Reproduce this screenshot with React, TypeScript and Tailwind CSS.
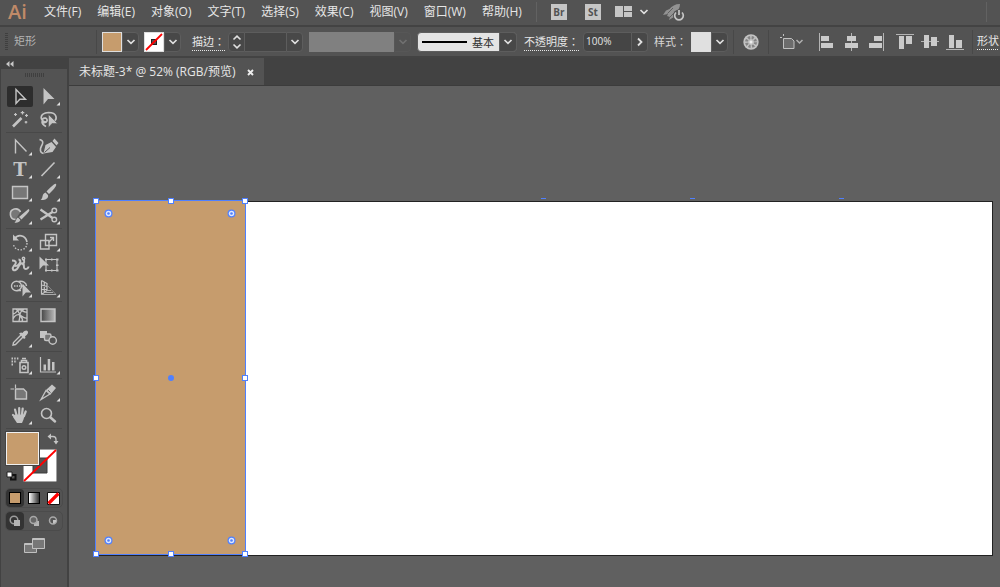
import type { ReactNode } from 'react';

interface ToolProps {
  label: string;
  active?: boolean;
  more?: boolean;
  children: ReactNode;
}

const menus = [
  '文件(F)',
  '编辑(E)',
  '对象(O)',
  '文字(T)',
  '选择(S)',
  '效果(C)',
  '视图(V)',
  '窗口(W)',
  '帮助(H)',
];

function Tool({ label, active, more, children }: ToolProps) {
  return (
    <button aria-label={label} aria-pressed={!!active} className="w-7 h-[23px]">
      <svg
        viewBox="0 0 28 23"
        className="block w-7 h-[23px]"
        fill="none"
        stroke="#c4c4c4"
        strokeWidth="1.4"
      >
        {active && <rect x="1" y="1" width="26" height="21" rx="2" fill="#2d2d2d" stroke="none" />}
        {children}
        {more && <path d="M26 17v3.5h-3.5z" fill="#e0e0e0" stroke="none" />}
      </svg>
    </button>
  );
}

function ToolGroup({ children }: { children: ReactNode }) {
  return (
    <div className="flex flex-wrap w-14 relative mb-1 after:absolute after:inset-x-0 after:-bottom-[2px] after:h-px after:bg-[#484848]">
      {children}
    </div>
  );
}

function Chevron({ color = '#e0e0e0' }: { color?: string }) {
  return (
    <svg viewBox="0 0 10 6" className="w-[10px] h-[6px]" fill="none" stroke={color} strokeWidth="1.7">
      <path d="M1.5 1l3.5 3.3L8.5 1" />
    </svg>
  );
}

function DropButton({ label, disabled }: { label: string; disabled?: boolean }) {
  return (
    <button
      aria-label={label}
      disabled={disabled}
      className={`w-[17px] h-5 flex items-center justify-center rounded-r-sm border ${
        disabled ? 'border-[#575757]' : 'bg-[#484848] border-[#5d5d5d]'
      }`}
    >
      <Chevron color={disabled ? '#707070' : '#e0e0e0'} />
    </button>
  );
}

function Divider() {
  return <div className="w-px h-6 bg-[#484848] shrink-0" />;
}

function MenuBar() {
  return (
    <header className="h-[25px] pb-[2px] flex items-center overflow-hidden shrink-0">
      <span className="w-11 pl-2 shrink-0 text-xl leading-5 font-semibold text-[#c08a68] font-['Open_Sans',sans-serif]">
        Ai
      </span>
      <nav className="flex gap-4 text-xs whitespace-nowrap text-[#e6e6e6]">
        {menus.map((menu) => (
          <button key={menu}>{menu}</button>
        ))}
      </nav>
      <div className="ml-[14px] w-px h-5 bg-[#626262] shrink-0" />
      <button className="ml-[14px] w-4 h-4 shrink-0 bg-[#c6c6c6] text-[#535353] text-[10px] leading-4 font-bold">
        Br
      </button>
      <button className="ml-[18px] w-4 h-4 shrink-0 bg-[#c6c6c6] text-[#535353] text-[10px] leading-4 font-bold">
        St
      </button>
      <button aria-label="排列文档" className="ml-[14px] flex items-center gap-[7px] shrink-0">
        <svg viewBox="0 0 17 12" className="w-[17px] h-3" fill="#c6c6c6">
          <path d="M0 0h8v11H0zM9 0h8v5H9zM9 6h8v5H9z" />
        </svg>
        <Chevron />
      </button>
      <button aria-label="GPU 性能" className="ml-[14px] shrink-0">
        <svg viewBox="0 0 22 18" className="w-[22px] h-[18px]" fill="#929292">
          <path d="M17 1C12 1 9 3 6.500 6L3 7.500 0 12l5-1-1 2 3 1-1 3 5-3 1-4c3-3 5-5 5-9z" />
          <path d="M4.500 10.500L10 5M7 14l5-5" stroke="#535353" strokeWidth=".8" />
          <circle cx="16" cy="12.500" r="6" fill="#535353" />
          <path
            d="M13 9.500a4.300 4.300 0 1 0 6 0M16 7v5"
            fill="none"
            stroke="#c6c6c6"
            strokeWidth="1.7"
          />
        </svg>
      </button>
      <div className="ml-auto mr-[13px] w-px h-5 bg-[#626262]" />
    </header>
  );
}

function AlignIcon({ label, d, line }: { label: string; d: string; line: string }) {
  return (
    <button aria-label={label}>
      <svg viewBox="0 0 18 18" className="w-[18px] h-[18px]">
        <path d={line} stroke="#b4b4b4" fill="none" />
        <path d={d} fill="#cacaca" />
      </svg>
    </button>
  );
}

function ControlBar() {
  return (
    <section className="h-[33px] flex items-center shrink-0 overflow-hidden border-y-2 border-[#434343] text-xs text-[#d6d6d6] whitespace-nowrap">
      <svg viewBox="0 0 3 18" className="ml-[5px] w-[3px] h-[18px] shrink-0">
        <path d="M1.500 0v18" stroke="#3f3f3f" strokeWidth="3" strokeDasharray="1 1" />
      </svg>
      <span className="ml-[6px] w-[82px] shrink-0 text-[11px] text-[#b4b4b4]">矩形</span>
      <Divider />
      <div className="ml-[5px] flex shrink-0">
        <button aria-label="填色" className="w-5 h-5 bg-[#c69c6d] border border-[#dedede]" />
        <DropButton label="填色选项" />
      </div>
      <div className="ml-[5px] flex shrink-0">
        <button aria-label="描边颜色" className="w-5 h-5 border border-[#dedede]">
          <svg viewBox="0 0 18 18" className="w-full h-full bg-white">
            <rect x="6.500" y="6.500" width="5" height="5" fill="#555" stroke="#222" />
            <path d="M1 17L17 1" stroke="#f00" strokeWidth="1.8" />
          </svg>
        </button>
        <DropButton label="描边颜色选项" />
      </div>
      <label
        htmlFor="stroke-width"
        className="ml-[11px] w-9 shrink-0 text-[11px] text-[#e6e6e6] underline decoration-dotted underline-offset-4 font-['Noto_Sans_CJK_TC',sans-serif]"
      >
        描边：
      </label>
      <div className="flex shrink-0">
        <button
          aria-label="调整描边粗细"
          className="w-[17px] h-5 flex items-center justify-center bg-[#484848] border border-[#5d5d5d] rounded-l-sm"
        >
          <svg viewBox="0 0 10 16" className="w-[10px] h-4" fill="none" stroke="#e0e0e0" strokeWidth="1.600">
            <path d="M1.500 5.500L5 2.200l3.500 3.300M1.500 10.500L5 13.800l3.500-3.300" />
          </svg>
        </button>
        <input id="stroke-width" className="w-[41px] h-5 bg-[#454545] border-y border-[#5d5d5d] px-1" />
        <DropButton label="描边粗细选项" />
      </div>
      <div className="ml-[6px] flex shrink-0">
        <div className="w-[85px] h-5 bg-[#808080]" />
        <DropButton label="变量宽度配置文件" disabled />
      </div>
      <div className="ml-[6px] relative shrink-0">
        <select
          aria-label="画笔定义"
          className="appearance-none block w-[100px] h-5 pl-[54px] text-[11px] leading-5 text-[#303030] bg-[#e4e4e4] border border-[#5d5d5d] rounded-sm"
        >
          <option>基本</option>
        </select>
        <div className="absolute left-[5px] top-[9px] w-[45px] h-[2px] bg-black pointer-events-none" />
        <div className="absolute right-0 top-0 w-[18px] h-5 flex items-center justify-center bg-[#484848] border border-[#5d5d5d] rounded-r-sm pointer-events-none">
          <Chevron />
        </div>
      </div>
      <label
        htmlFor="opacity"
        className="ml-[7px] w-[59px] shrink-0 text-[11px] text-[#e6e6e6] underline decoration-dotted underline-offset-4 font-['Noto_Sans_CJK_TC',sans-serif]"
      >
        不透明度：
      </label>
      <div className="flex shrink-0">
        <input
          id="opacity"
          defaultValue="100%"
          className="w-[49px] h-5 px-[2px] pb-[2px] text-[10px] text-[#e6e6e6] bg-[#454545] border border-[#5d5d5d] rounded-l-sm"
        />
        <button
          aria-label="不透明度滑块"
          className="w-4 h-5 flex items-center justify-center bg-[#484848] border border-l-0 border-[#5d5d5d] rounded-r-sm"
        >
          <svg viewBox="0 0 6 10" className="w-[6px] h-[10px]" fill="none" stroke="#e0e0e0" strokeWidth="1.8">
            <path d="M1 1.500L4.500 5 1 8.500" />
          </svg>
        </button>
      </div>
      <span className="ml-[6px] w-[37px] shrink-0 text-[11px] font-['Noto_Sans_CJK_TC',sans-serif]">样式：</span>
      <div className="flex shrink-0">
        <button aria-label="图形样式" className="w-5 h-5 bg-[#e0e0e0] border border-[#dedede]" />
        <DropButton label="图形样式选项" />
      </div>
      <div className="ml-[5px] flex shrink-0">
        <Divider />
      </div>
      <button aria-label="重新着色图稿" className="ml-[9px] shrink-0">
        <svg viewBox="0 0 16 16" className="w-4 h-4">
          <circle cx="8" cy="8" r="7.700" fill="#c4c4c4" />
          <circle cx="8" cy="8" r="4.500" fill="none" stroke="#858585" strokeWidth="3" strokeDasharray="2.300 1.230" />
          <path d="M8 1v14M1 8h14M3 3l10 10M13 3L3 13" stroke="#bbb" strokeWidth=".6" />
          <circle cx="8" cy="8" r="1.500" fill="#eee" />
        </svg>
      </button>
      <div className="ml-[9px] flex shrink-0">
        <Divider />
      </div>
      <button aria-label="对齐到" className="ml-[11px] flex items-center shrink-0">
        <svg viewBox="0 0 15 16" className="w-[15px] h-4" fill="none" stroke="#c0c0c0">
          <path d="M3.500 4.500h8l2.500 2.500v7.500H3.500z" fill="#6c6c6c" />
          <path d="M0 3.500h2M3.500 0v2" />
        </svg>
        <svg viewBox="0 0 9 6" className="w-[9px] h-[6px]" fill="none" stroke="#b0b0b0" strokeWidth="1.500">
          <path d="M1.500 1l3 3 3-3" />
        </svg>
      </button>
      <div className="ml-[14px] flex gap-[7px] shrink-0">
        <AlignIcon label="水平左对齐" line="M1.500 0v18" d="M3 3h8v5H3zM3 10h12v5H3z" />
        <AlignIcon label="水平居中对齐" line="M8.500 0v18" d="M4 3h9v5H4zM2 10h13v5H2z" />
        <AlignIcon label="水平右对齐" line="M15.500 0v18" d="M6 3h8v5H6zM1 10h13v5H1z" />
      </div>
      <div className="ml-[10px] flex gap-[7px] shrink-0">
        <AlignIcon label="垂直顶对齐" line="M0 1.500h18" d="M3 3h5v13H3zM10 3h6v8h-6z" />
        <AlignIcon label="垂直居中对齐" line="M0 8.500h18" d="M3 2h5v13H3zM10 4h6v9h-6z" />
        <AlignIcon label="垂直底对齐" line="M0 16.500h18" d="M3 2h5v13H3zM10 7h6v8h-6z" />
      </div>
      <div className="ml-2 mr-1 flex shrink-0">
        <Divider />
      </div>
      <button className="shrink-0 text-[11px] text-[#e6e6e6] underline decoration-dotted underline-offset-4">
        形状
      </button>
    </section>
  );
}

function ColorControls() {
  return (
    <div className="relative w-14 h-[55px] mt-[5px]">
      <button aria-label="描边" className="absolute left-[17px] top-[17px] w-[34px] h-[33px]">
        <svg viewBox="0 0 34 33" className="block w-full h-full">
          <path d="M0 0h34v33H0z" fill="#fff" stroke="#444" />
          <path d="M10 9h14v15H10z" fill="#535353" stroke="#3c3c3c" />
          <path d="M1 32L33 1" stroke="#f00" strokeWidth="1.8" />
        </svg>
      </button>
      <button
        aria-label="填色"
        className="absolute left-0 top-0 w-[33px] h-[33px] bg-[#c69c6d] border border-[#f0f0f0] outline outline-[#444]"
      />
      <button aria-label="互换填色和描边" className="absolute left-[41px] top-px w-[12px] h-[12px]">
        <svg viewBox="0 0 12 12" className="block w-full h-full" fill="none" stroke="#c4c4c4" strokeWidth="1.3">
          <path d="M3 3.500h3a3 3 0 0 1 3 3V9" />
          <path d="M4 .500v6L0.500 3.500zM6.500 8h5l-2.500 3.500z" fill="#c4c4c4" stroke="none" />
        </svg>
      </button>
      <button aria-label="默认填色和描边" className="absolute left-0 top-[39px] w-[11px] h-[10px]">
        <svg viewBox="0 0 11 10" className="block w-full h-full">
          <path d="M5 4h4.500v4.500H5z" fill="none" stroke="#111" strokeWidth="2" />
          <path d="M1 1h5v5H1z" fill="#fff" stroke="#222" />
        </svg>
      </button>
    </div>
  );
}

function ToolPanel() {
  return (
    <aside className="w-[67px] shrink-0 bg-[#535353] border-l border-[#424242]">
      <button aria-label="折叠面板" className="w-full h-[11px] flex items-center pl-[5px] bg-[#424242]">
        <svg viewBox="0 0 8 6" className="w-2 h-[6px]" fill="#c8c8c8">
          <path d="M3.500 0v6L0 3zM7.500 0v6L4 3z" />
        </svg>
      </button>
      <div className="h-4 flex justify-center pt-1">
        <svg viewBox="0 0 19 4" className="w-[19px] h-1">
          <path d="M0 2h19" stroke="#3f3f3f" strokeWidth="4" strokeDasharray="1 1" />
        </svg>
      </div>

      <div className="pl-[5px]">
        <ToolGroup>
          <Tool label="选择工具" active>
            <path d="M10 4.500v14l3.800-4.300h5.700z" />
          </Tool>
          <Tool label="直接选择工具" more>
            <path d="M9.500 3V19.500l4.500-5.500h6.500z" fill="#c4c4c4" stroke="none" />
          </Tool>
          <Tool label="魔棒工具">
            <path d="M7 18.500L15.500 10" strokeWidth="2.600" />
            <path d="M16.500 3v3.500M14.700 4.700h3.600M20.500 6v3M19 7.500h3M9.500 5v3M8 6.500h3M20 13v2.500M18.700 14.200h2.600" strokeWidth="1.200" />
          </Tool>
          <Tool label="套索工具">
            <path d="M13 14c-8 0-8-9 1.500-9.500 9 0 9 7 5 9M9 14.500c-3-4 3-6 4-3s-4 4-5 2c0 3 2 4 4 5" strokeWidth="1.700" />
            <path d="M14.500 6.500v13l3.500-4h5.500z" fill="#c4c4c4" stroke="#535353" strokeWidth=".5" />
          </Tool>
        </ToolGroup>

        <ToolGroup>
          <Tool label="锚点工具" more>
            <path d="M9.500 18.500V5L20.500 16.500" />
          </Tool>
          <Tool label="曲率工具">
            <path d="M9.500 18.500l2-8.500 6-3 4.500 5-3.500 5zM18.500 6l2-2.500 4 4.500-2 2.500z" fill="#c4c4c4" stroke="none" />
            <path d="M10.500 17.500l5.500-5" stroke="#535353" strokeWidth="1" />
            <path d="M5.500 4.500c4.500 1 3.500 4 2 6.500s-2 7 2 7.500" strokeWidth="1.600" />
          </Tool>
          <Tool label="文字工具" more>
            <text x="14" y="17.500" textAnchor="middle" fontSize="18" fontWeight="bold" fontFamily="DejaVu Serif" fill="#c4c4c4" stroke="none">
              T
            </text>
          </Tool>
          <Tool label="直线段工具" more>
            <path d="M7.500 18L20.500 4.500" strokeWidth="1.600" />
          </Tool>
          <Tool label="矩形工具" more>
            <path d="M6.500 5.500h15v12h-15z" fill="#777" />
          </Tool>
          <Tool label="画笔工具" more>
            <path d="M22 3c1 1-1 4.500-7 10l-2.500-2.500C17.500 5.500 21 2 22 3zM11.500 11.500l2.500 2.500c1 4-4 5.500-7.500 5 3-2 1-6 5-7.500z" fill="#c4c4c4" stroke="none" />
          </Tool>
          <Tool label="斑点画笔工具" more>
            <path d="M14.500 8a5.300 5.300 0 1 0-5 7.500" fill="#777" strokeWidth="1.600" />
            <path d="M22.500 5c2 1 1 2.500-7 10.500L13 13zM12 13.500l2.500 2.500c-1 2.500-4 3-6 2.500 2-1 1-3.500 3.500-5z" fill="#c4c4c4" stroke="none" />
          </Tool>
          <Tool label="剪刀工具" more>
            <path d="M6.500 5.500l12 8.500M6.500 15.500l12-7.500" strokeWidth="2.200" />
            <circle cx="20.300" cy="6.500" r="2.300" />
            <circle cx="20.300" cy="15.500" r="2.300" />
          </Tool>
        </ToolGroup>

        <ToolGroup>
          <Tool label="旋转工具" more>
            <path d="M8.500 8c3-5 11-4.500 12.500 3" strokeWidth="1.700" />
            <path d="M21 12c0 9-13 9-13.500 1" strokeDasharray="1.500 1.500" />
            <path d="M7 3.500v6h6z" fill="#c4c4c4" stroke="none" />
          </Tool>
          <Tool label="比例缩放工具" more>
            <path d="M11.500 3.500h11v11h-11zM6.500 9.500h8.500v8.500H6.500z" />
            <path d="M14.500 11.500L19 7M16 6.500h3.500V10" />
          </Tool>
          <Tool label="宽度工具" more>
            <path d="M6 6.500c3.500 0 5 1.500 3 4s-3 3-2 5 4 0 5-2 3-5 5-4 0 4 1.500 5 4 0 4-2M12.500 5.500c2 0 2.500 2 1 4s-3.500 3-5 2M17 5.500c2 1 1.500 4-1 5" strokeWidth="2" />
            <circle cx="17.500" cy="4.500" r="1.200" />
          </Tool>
          <Tool label="自由变换工具">
            <path d="M12 5.500h11v11H12z" strokeWidth="1.100" />
            <path d="M11 4.500h2v2h-2zM17 4.500h1.500v2H17zM22 4.500h2.500v2H22zM22 10.500h2.500v1.500H22zM22 15.500h2.500v2H22zM11 15.500h2v2h-2zM17 15.500h1.500v2H17z" fill="#c4c4c4" stroke="none" />
            <path d="M5.500 2.500v13L9 11.500h6z" fill="#c4c4c4" stroke="none" />
          </Tool>
          <Tool label="形状生成器工具" more>
            <ellipse cx="10.500" cy="9" rx="5" ry="4.700" />
            <path d="M12.500 4.500c4-1 8 1 8 4.500M11 13.500h4" />
            <path d="M8 9h9" strokeDasharray="1.500 1" />
            <path d="M16.500 6.500v13l3.300-4H25z" fill="#c4c4c4" stroke="none" />
          </Tool>
          <Tool label="透视网格工具" more>
            <path d="M7.500 3.500v14M7.500 3.500l5.500 3v7M7.500 8l5.500 1.500M7.500 12.500H13M7.500 17.500L13 13.500M10.300 5v10.500" strokeWidth="1.200" />
            <path d="M13 8l9 9.500" stroke="#8e8e8e" strokeWidth="1" />
            <path d="M13 13.500h4M11 15.500h8M7.500 17.500H22" stroke="#aaa" strokeWidth="1.200" />
          </Tool>
        </ToolGroup>

        <ToolGroup>
          <Tool label="网格工具">
            <path d="M7 5h14v12.500H7zM7 10c3 0 3-3 6-4s4 3 8 2M7 15c2-4 5-5 7-4s4 4 7 3M10 5c3 3 5 5 3 12.500M18 5c-4 3-5 6-3 8s2 3 1 4.500" strokeWidth="1.300" />
          </Tool>
          <Tool label="渐变工具">
            <defs>
              <linearGradient id="toolGradient">
                <stop offset="0" stopColor="#444" />
                <stop offset="1" stopColor="#bbb" />
              </linearGradient>
            </defs>
            <path d="M7 5h14v12.500H7z" fill="url(#toolGradient)" />
          </Tool>
          <Tool label="吸管工具" more>
            <path d="M15 8l-7.500 7.500L7 18l2.500-.5L17 10" />
            <path d="M13 6.500l2-1 1.500.5c3-4 6-2.500 5.500 0-.5 1.500-2 2.500-3 3.500l.5 1.500-1.500 1z" fill="#c4c4c4" stroke="none" />
          </Tool>
          <Tool label="混合工具">
            <path d="M6 4h7v7H6z" fill="#c4c4c4" stroke="none" />
            <rect x="10.500" y="7" width="6.500" height="6.500" rx="1.500" fill="#777" />
            <circle cx="18.700" cy="13.500" r="3.700" fill="#535353" />
          </Tool>
        </ToolGroup>

        <ToolGroup>
          <Tool label="符号喷枪工具" more>
            <path d="M5.500 4.500H13M5.500 7.500H11M5.500 10.500H8" strokeWidth="2" strokeDasharray="1.500 1.200" />
            <path d="M14 8.500h8v10h-8zM15.500 8V6.500h5V8M16 4.500h4" strokeWidth="1.600" />
            <circle cx="18" cy="13.500" r="1.800" />
          </Tool>
          <Tool label="柱形图工具" more>
            <path d="M6.500 3v15H22" strokeWidth="1.200" />
            <path d="M9.500 10.500H12v6H9.500zM13.700 5h2.500v11.500h-2.500zM18 8h2.500v8.500H18z" fill="#c4c4c4" stroke="none" />
          </Tool>
        </ToolGroup>

        <ToolGroup>
          <Tool label="画板工具">
            <path d="M9.500 8h8l3 3v7h-11z" fill="#777" />
            <path d="M4.500 8H8M9.500 3.500v3.500" strokeWidth="1.200" />
          </Tool>
          <Tool label="切片工具" more>
            <path d="M7 18.500l5-9 4 3.500z" />
            <path d="M12 9l6-5.500 4 3.500-5.500 6.500z" fill="#c4c4c4" stroke="none" />
            <path d="M14 9.300l2.500 2.200" stroke="#535353" strokeWidth="1" />
          </Tool>
          <Tool label="抓手工具" more>
            <path d="M10.500 11L9 5.500M13.200 10.500V4M16 10.500l.7-6M18 12L19.700 7.500M10.500 14L7 11" strokeWidth="2.200" strokeLinecap="round" />
            <path d="M9 10.500h10l-1.500 5-1.500 3.500h-5l-4-6z" fill="#c4c4c4" stroke="none" />
          </Tool>
          <Tool label="缩放工具">
            <circle cx="12.500" cy="9.500" r="5" strokeWidth="1.600" />
            <path d="M16.500 13.500l4.500 4" strokeWidth="2.500" strokeLinecap="round" />
          </Tool>
        </ToolGroup>

        <ColorControls />

        <div className="mt-[2px] w-14 h-[18px] flex items-center gap-px rounded-sm outline outline-[#4b4b4b]">
          <button aria-label="颜色" className="w-[18px] h-[18px] flex items-center justify-center bg-[#333] rounded-sm">
            <span className="w-3 h-3 bg-[#c69c6d] border border-black" />
          </button>
          <button aria-label="渐变" className="w-[18px] h-[18px] flex items-center justify-center">
            <span className="w-3 h-3 bg-linear-to-r from-white to-[#333] border border-black" />
          </button>
          <button aria-label="无" className="w-[18px] h-[18px] flex items-center justify-center">
            <svg viewBox="0 0 13 13" className="w-[13px] h-[13px]">
              <path d="M.5.5h12v12H.5z" fill="#fff" stroke="#111" />
              <path d="M1.500 11.500l10-10" stroke="#f00" strokeWidth="3.200" />
            </svg>
          </button>
        </div>

        <div className="mt-[5px] w-14 h-[18px] flex items-center gap-px rounded-sm outline outline-[#4b4b4b]">
          <button aria-label="正常绘图" className="w-[18px] h-[18px] bg-[#333] rounded-sm">
            <svg viewBox="0 0 18 18" className="w-full h-full">
              <circle cx="8" cy="8" r="3.800" fill="none" stroke="#9c9c9c" strokeWidth="1.500" />
              <path d="M8 8h6v6H8z" fill="#b4b4b4" />
            </svg>
          </button>
          <button aria-label="背面绘图" className="w-[18px] h-[18px]">
            <svg viewBox="0 0 18 18" className="w-full h-full">
              <path d="M9 9h5v5H9z" fill="#b4b4b4" />
              <circle cx="8.500" cy="8" r="3.500" fill="#666" stroke="#a8a8a8" strokeWidth="1.500" />
            </svg>
          </button>
          <button aria-label="内部绘图" className="w-[18px] h-[18px]">
            <svg viewBox="0 0 18 18" className="w-full h-full">
              <circle cx="9" cy="8.500" r="3.500" fill="#555" stroke="#a8a8a8" strokeWidth="1.500" />
              <path d="M9 8h3v2l-2 1.500H9z" fill="#c4c4c4" />
            </svg>
          </button>
        </div>

        <button aria-label="更改屏幕模式" className="block mt-2 ml-[18px]">
          <svg viewBox="0 0 22 16" className="w-[22px] h-4" fill="#777" stroke="#c0c0c0">
            <path d="M.5 5.500h12v9H.5z" />
            <path d="M8.500.5h12v10h-12z" />
            <path d="M8.500 1.500h12M1 6.500h7" />
          </svg>
        </button>
      </div>
    </aside>
  );
}

function Handle({ className }: { className: string }) {
  return (
    <span
      className={`absolute w-[6px] h-[6px] bg-white border border-[#4f80ff] -translate-x-1/2 -translate-y-1/2 ${className}`}
    />
  );
}

function CornerWidget({ className }: { className: string }) {
  return (
    <svg viewBox="0 0 9 9" className={`absolute w-[9px] h-[9px] ${className}`}>
      <circle cx="4.500" cy="4.500" r="3.400" fill="#dfe8ff" stroke="#4f80ff" strokeWidth="1.200" />
      <circle cx="4.500" cy="4.500" r="1.300" fill="#4f80ff" />
    </svg>
  );
}

function Artboard() {
  return (
    <main className="flex-1 flex bg-[#606060] pt-[115px] pr-[7px] pb-[31px] pl-[27px]">
      <div className="relative flex-1 bg-white border border-[#222]">
        <span className="absolute left-1/2 -top-1 w-[5px] h-px bg-[#4f80ff] -translate-x-1" />
        <span className="absolute left-2/3 -top-1 w-[5px] h-px bg-[#4f80ff] -translate-x-1" />
        <span className="absolute left-5/6 -top-1 w-[5px] h-px bg-[#4f80ff] -translate-x-1" />
        <div className="absolute -left-px -top-px w-1/6 h-full bg-[#c69c6d] outline outline-[#4f80ff]">
          <Handle className="left-0 top-0" />
          <Handle className="left-1/2 top-0" />
          <Handle className="left-full top-0" />
          <Handle className="left-0 top-1/2" />
          <Handle className="left-full top-1/2" />
          <Handle className="left-0 top-full" />
          <Handle className="left-1/2 top-full" />
          <Handle className="left-full top-full" />
          <CornerWidget className="left-2 top-2" />
          <CornerWidget className="right-[9px] top-2" />
          <CornerWidget className="left-2 bottom-[9px]" />
          <CornerWidget className="right-[9px] bottom-[9px]" />
          <span className="absolute left-1/2 top-1/2 w-[6px] h-[6px] rounded-full bg-[#4f80ff] -translate-x-1/2 -translate-y-1/2" />
        </div>
      </div>
    </main>
  );
}

export default function App() {
  return (
    <div className="h-screen min-h-[560px] flex flex-col overflow-hidden bg-[#535353] select-none font-['Open_Sans','Noto_Sans_CJK_SC',sans-serif]">
      <MenuBar />
      <ControlBar />
      <div className="flex-1 flex min-h-0">
        <ToolPanel />
        <div className="flex-1 flex flex-col min-w-0 border-l-2 border-[#424242]">
          {/* Document tabs */}
          <div className="h-7 flex shrink-0 bg-[#424242] border-b border-[#3c3c3c]">
            <div className="flex items-center gap-3 pt-px px-[10px] bg-[#535353] text-xs text-[#e6e6e6] whitespace-nowrap">
              <span>未标题-3* @ 52% (RGB/预览)</span>
              <button aria-label="关闭">
                <svg viewBox="0 0 7 7" className="w-[7px] h-[7px]" stroke="#eee" strokeWidth="1.900">
                  <path d="M1 1l5 5M6 1L1 6" />
                </svg>
              </button>
            </div>
          </div>
          <Artboard />
        </div>
      </div>
    </div>
  );
}
